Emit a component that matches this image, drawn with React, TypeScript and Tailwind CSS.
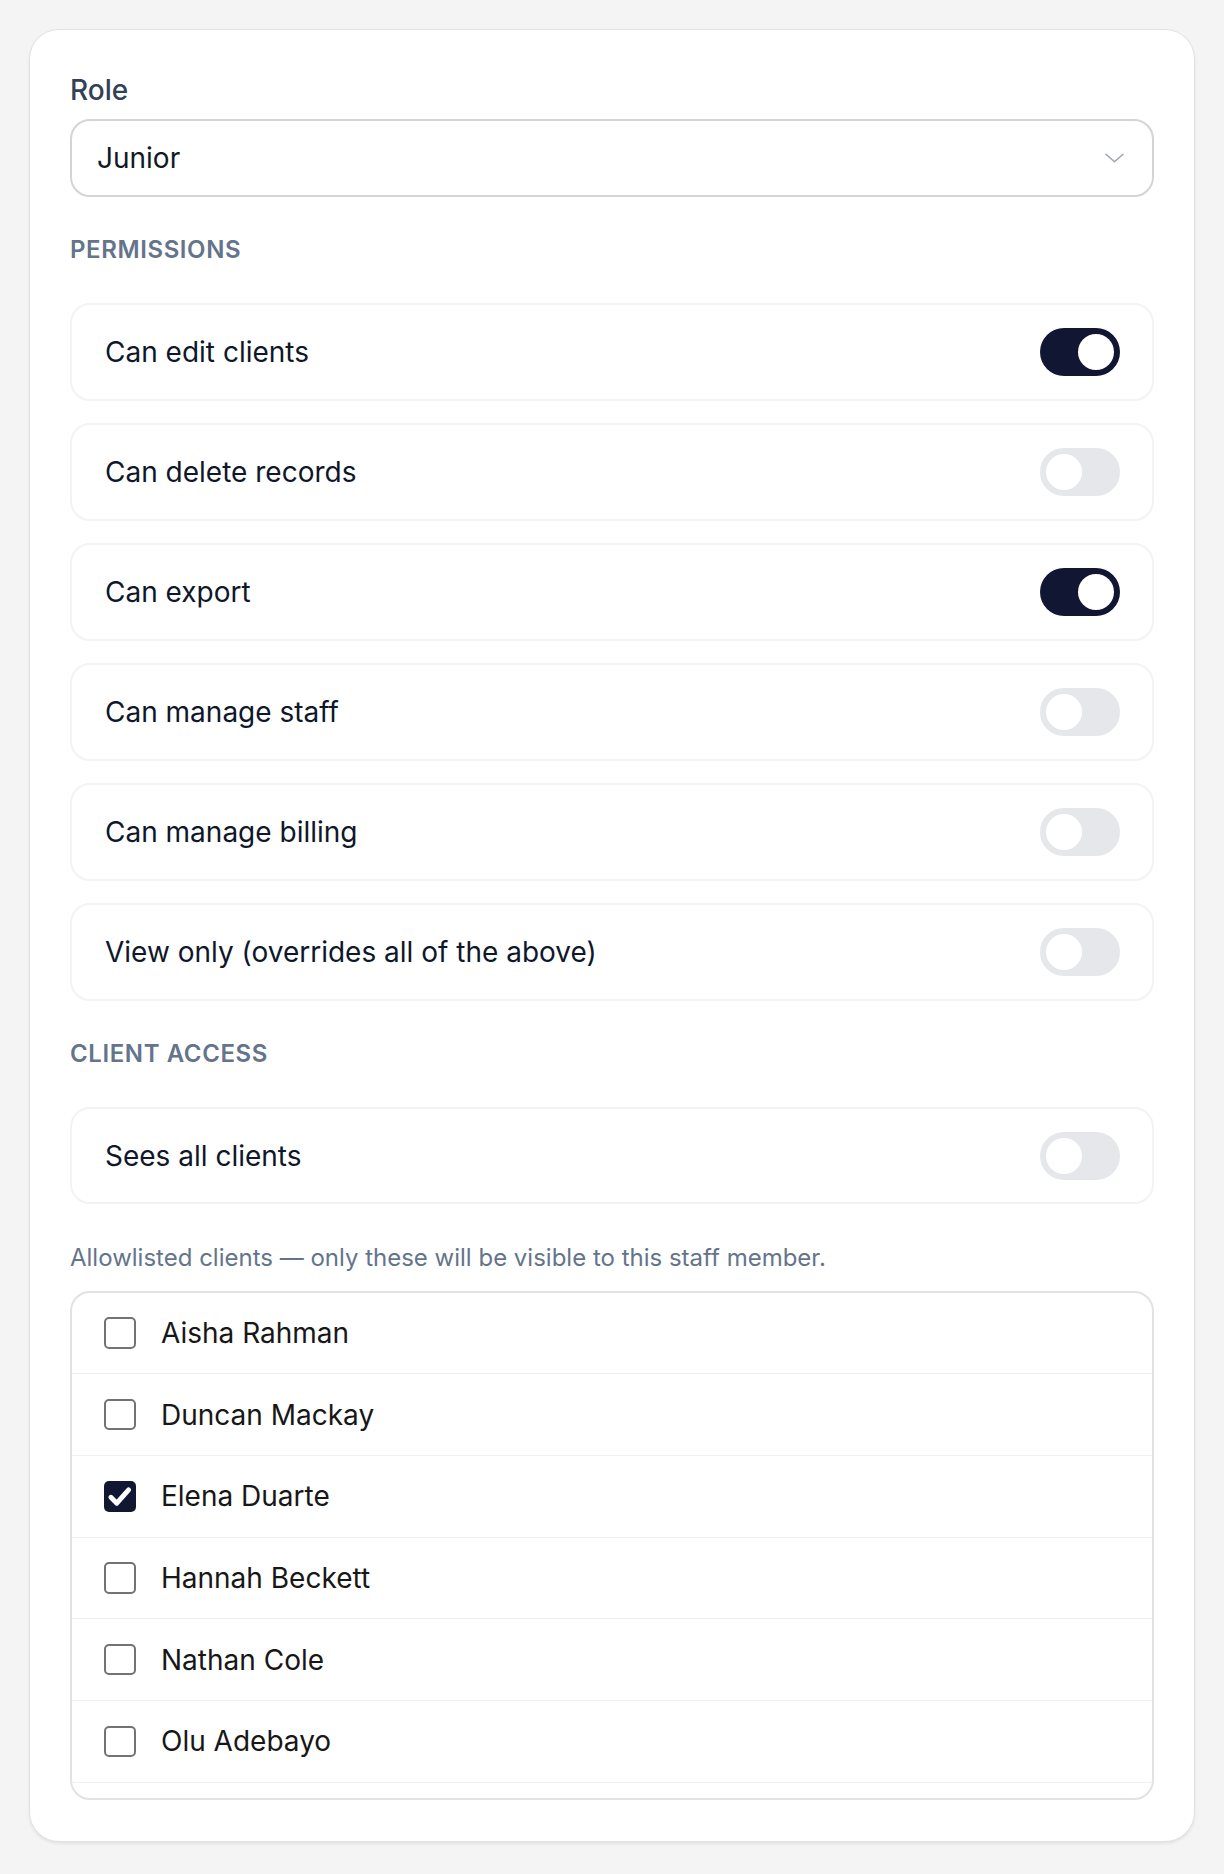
import React, { useState } from 'react';

const permissions = [
  { label: 'Can edit clients', on: true },
  { label: 'Can delete records', on: false },
  { label: 'Can export', on: true },
  { label: 'Can manage staff', on: false },
  { label: 'Can manage billing', on: false },
  { label: 'View only (overrides all of the above)', on: false },
];

const clients = [
  { name: 'Aisha Rahman', checked: false },
  { name: 'Duncan Mackay', checked: false },
  { name: 'Elena Duarte', checked: true },
  { name: 'Hannah Beckett', checked: false },
  { name: 'Nathan Cole', checked: false },
  { name: 'Olu Adebayo', checked: false },
  { name: 'Priya Nair', checked: false },
];

const Toggle: React.FC<{ on: boolean; onChange: () => void }> = ({ on, onChange }) => (
  <button
    type="button"
    onClick={onChange}
    className={`flex h-[48px] w-[80px] shrink-0 items-center rounded-full p-[6px] ${
      on ? 'justify-end bg-[#111733]' : 'justify-start bg-[#e5e7eb]'
    }`}
  >
    <span className="block h-[36px] w-[36px] rounded-full bg-white" />
  </button>
);

const Checkbox: React.FC<{ checked: boolean }> = ({ checked }) =>
  checked ? (
    <span className="flex h-[31.5px] w-[31.5px] shrink-0 items-center justify-center rounded-[5px] bg-[#111733]">
      <svg viewBox="0 0 32 32" className="h-[31.5px] w-[31.5px]">
        <path d="M7 16.5 L13 22.5 L25 9" fill="none" stroke="white" strokeWidth="5" strokeLinecap="round" strokeLinejoin="round" />
      </svg>
    </span>
  ) : (
    <span className="block h-[31.5px] w-[31.5px] shrink-0 rounded-[5px] border-2 border-[#737373] bg-white" />
  );

const SectionTitle: React.FC<{ children: React.ReactNode }> = ({ children }) => (
  <h3 className="text-[24px] leading-[32px] font-semibold uppercase tracking-wide text-[#64748b]">{children}</h3>
);

export default function App() {
  const [perms, setPerms] = useState(permissions.map((p) => p.on));
  const [seesAll, setSeesAll] = useState(false);

  return (
    <div className="min-h-screen bg-[#f4f4f5] px-[29px] pt-[29px] pb-[32px] font-['Inter','Liberation_Sans',sans-serif]">
      <div className="rounded-[30px] border border-[#e2e2e4] bg-white px-[40px] pt-[41px] pb-[40.6px] shadow-[0_2px_3px_rgba(0,0,0,0.07)]">
        {/* Role */}
        <label className="block text-[28px] leading-[39px] font-medium text-[#334155]">Role</label>
        <div className="mt-[9px] flex h-[78.4px] items-center justify-between rounded-[20px] border-2 border-[#d4d4d8] pl-[25px] pr-[28px]">
          <span className="text-[28px] text-[#111827]">Junior</span>
          <svg viewBox="0 0 20 10" className="h-[10px] w-[19px]">
            <path d="M1 1 L10 9 L19 1" fill="none" stroke="#9ca3af" strokeWidth="1.6" strokeLinecap="round" strokeLinejoin="round" />
          </svg>
        </div>

        {/* Permissions */}
        <div className="mt-[37px]">
          <SectionTitle>Permissions</SectionTitle>
        </div>
        <div className="mt-[37px] flex flex-col gap-[22.7px]">
          {permissions.map((p, i) => (
            <div
              key={p.label}
              className="flex h-[97.3px] items-center justify-between rounded-[20px] border-2 border-[#f3f3f5] pl-[33px] pr-[32px]"
            >
              <span className="text-[28px] text-[#0f172a]">{p.label}</span>
              <Toggle on={perms[i]} onChange={() => setPerms(perms.map((v, j) => (j === i ? !v : v)))} />
            </div>
          ))}
        </div>

        {/* Client access */}
        <div className="mt-[37.3px]">
          <SectionTitle>Client access</SectionTitle>
        </div>
        <div className="mt-[37px] flex h-[97.3px] items-center justify-between rounded-[20px] border-2 border-[#f3f3f5] pl-[33px] pr-[32px]">
          <span className="text-[28px] text-[#0f172a]">Sees all clients</span>
          <Toggle on={seesAll} onChange={() => setSeesAll(!seesAll)} />
        </div>

        <p className="mt-[37.4px] text-[24px] leading-[32px] text-[#64748b]">
          Allowlisted clients — only these will be visible to this staff member.
        </p>

        <div className="mt-[17px] h-[509.7px] overflow-y-auto rounded-[20px] border-2 border-[#e2e2e4] [scrollbar-width:none]">
          {clients.map((c) => (
            <div
              key={c.name}
              className="flex h-[81.7px] items-center gap-[25.5px] border-b border-[#f0f0f1] pl-[32px]"
            >
              <Checkbox checked={c.checked} />
              <span className="text-[28px] text-[#171717]">{c.name}</span>
            </div>
          ))}
        </div>
      </div>
    </div>
  );
}
